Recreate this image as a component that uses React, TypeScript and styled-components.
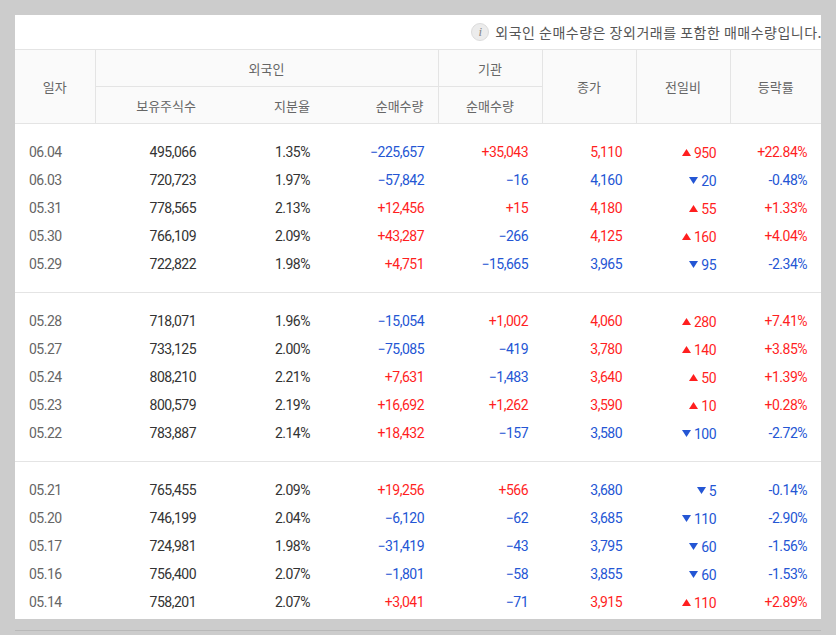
import React from 'react';
import styled, { createGlobalStyle } from 'styled-components';

const GlobalStyle = createGlobalStyle`
  html, body {
    margin: 0;
    padding: 0;
    background: #cccccc;
  }
`;

const Page = styled.div`
  padding: 15px 15px 0 15px;
  width: 806px;
`;

const Panel = styled.div`
  width: 806px;
  height: 604px;
  background: #fff;
  overflow: hidden;
`;

const BottomRule = styled.div`
  margin-top: 11px;
  height: 1px;
  background: #b9b9b9;
`;

const InfoBar = styled.div`
  height: 34px;
  display: flex;
  align-items: center;
  justify-content: flex-end;
  gap: 6px;
  margin-right: -1px;
  font-family: 'Noto Sans CJK KR', 'Noto Sans', sans-serif;
  font-size: 14px;
  letter-spacing: 0.5px;
  color: #555;
  white-space: nowrap;
`;

const InfoIcon = styled.span`
  width: 16px;
  height: 16px;
  border-radius: 50%;
  background: #ececec;
  border: 1px solid #dcdcdc;
  display: flex;
  align-items: center;
  justify-content: center;
  font-family: 'Liberation Serif', serif;
  font-style: italic;
  font-size: 13px;
  letter-spacing: 0;
  color: #888;
`;

const Table = styled.table`
  width: 806px;
  border-collapse: collapse;
  table-layout: fixed;
`;

const HeadCell = styled.th<{ $align?: string; $line?: boolean }>`
  height: 36px;
  padding: 0 14px;
  background: #fafafa;
  border-top: 1px solid #e4e4e4;
  border-bottom: 1px solid #e4e4e4;
  border-left: ${({ $line }) => ($line ? '1px solid #e4e4e4' : 'none')};
  font-family: 'Noto Sans CJK KR', 'Noto Sans', sans-serif;
  font-size: 13px;
  font-weight: 400;
  color: #666;
  text-align: ${({ $align }) => $align || 'center'};
`;

const Cell = styled.td<{ $color?: string; $left?: boolean; $pt?: number; $pb?: number; $sep?: boolean }>`
  height: 28px;
  padding: ${({ $pt }) => $pt || 0}px 14px ${({ $pb }) => $pb || 0}px;
  border-top: ${({ $sep }) => ($sep ? '1px solid #e4e4e4' : 'none')};
  font-family: Roboto, 'Liberation Sans', sans-serif;
  font-size: 14px;
  letter-spacing: -0.5px;
  color: ${({ $color }) => $color || '#333'};
  text-align: ${({ $left }) => ($left ? 'left' : 'right')};
  white-space: nowrap;
`;

const Change = styled.span`
  display: inline-flex;
  align-items: center;
  gap: 3px;
`;

const RED = '#ff1f1f';
const BLUE = '#2456d4';

type RowType = [string, string, string, string, string, string, number, string];

const groups: RowType[][] = [
  [
    ['06.04', '495,066', '1.35%', '−225,657', '+35,043', '5,110', 950, '+22.84%'],
    ['06.03', '720,723', '1.97%', '−57,842', '−16', '4,160', -20, '-0.48%'],
    ['05.31', '778,565', '2.13%', '+12,456', '+15', '4,180', 55, '+1.33%'],
    ['05.30', '766,109', '2.09%', '+43,287', '−266', '4,125', 160, '+4.04%'],
    ['05.29', '722,822', '1.98%', '+4,751', '−15,665', '3,965', -95, '-2.34%'],
  ],
  [
    ['05.28', '718,071', '1.96%', '−15,054', '+1,002', '4,060', 280, '+7.41%'],
    ['05.27', '733,125', '2.00%', '−75,085', '−419', '3,780', 140, '+3.85%'],
    ['05.24', '808,210', '2.21%', '+7,631', '−1,483', '3,640', 50, '+1.39%'],
    ['05.23', '800,579', '2.19%', '+16,692', '+1,262', '3,590', 10, '+0.28%'],
    ['05.22', '783,887', '2.14%', '+18,432', '−157', '3,580', -100, '-2.72%'],
  ],
  [
    ['05.21', '765,455', '2.09%', '+19,256', '+566', '3,680', -5, '-0.14%'],
    ['05.20', '746,199', '2.04%', '−6,120', '−62', '3,685', -110, '-2.90%'],
    ['05.17', '724,981', '1.98%', '−31,419', '−43', '3,795', -60, '-1.56%'],
    ['05.16', '756,400', '2.07%', '−1,801', '−58', '3,855', -60, '-1.53%'],
    ['05.14', '758,201', '2.07%', '+3,041', '−71', '3,915', 110, '+2.89%'],
  ],
];

const signColor = (v: string) => (v.startsWith('+') ? RED : BLUE);

const Arrow: React.FC<{ up: boolean }> = ({ up }) => (
  <svg width="9" height="7" viewBox="0 0 9 7">
    <path d={up ? 'M4.5 0 L9 7 L0 7 Z' : 'M0 0 L9 0 L4.5 7 Z'} fill={up ? RED : BLUE} />
  </svg>
);

const App: React.FC = () => (
  <>
    <GlobalStyle />
    <Page>
      <Panel>
        <InfoBar>
          <InfoIcon>i</InfoIcon>
          <span>외국인 순매수량은 장외거래를 포함한 매매수량입니다.</span>
        </InfoBar>
        <Table>
          <colgroup>
            <col style={{ width: 80 }} />
            <col style={{ width: 115 }} />
            <col style={{ width: 114 }} />
            <col style={{ width: 114 }} />
            <col style={{ width: 104 }} />
            <col style={{ width: 94 }} />
            <col style={{ width: 94 }} />
            <col style={{ width: 91 }} />
          </colgroup>
          <thead>
            <tr>
              <HeadCell rowSpan={2}>일자</HeadCell>
              <HeadCell colSpan={3} $line>외국인</HeadCell>
              <HeadCell $line>기관</HeadCell>
              <HeadCell rowSpan={2} $line>종가</HeadCell>
              <HeadCell rowSpan={2} $line>전일비</HeadCell>
              <HeadCell rowSpan={2} $line>등락률</HeadCell>
            </tr>
            <tr>
              <HeadCell $align="right" $line>보유주식수</HeadCell>
              <HeadCell $align="right">지분율</HeadCell>
              <HeadCell $align="right">순매수량</HeadCell>
              <HeadCell $line>순매수량</HeadCell>
            </tr>
          </thead>
          {groups.map((rows, g) => (
            <tbody key={g}>
              {rows.map((r, i) => {
                const pt = i === 0 ? 14 : 0;
                const pb = i === rows.length - 1 ? 14 : 0;
                const sep = i === 0 && g > 0;
                const up = r[6] > 0;
                const dirColor = up ? RED : BLUE;
                const p = { $pt: pt, $pb: pb, $sep: sep };
                return (
                  <tr key={r[0]}>
                    <Cell {...p} $left $color="#666">{r[0]}</Cell>
                    <Cell {...p}>{r[1]}</Cell>
                    <Cell {...p}>{r[2]}</Cell>
                    <Cell {...p} $color={signColor(r[3])}>{r[3]}</Cell>
                    <Cell {...p} $color={signColor(r[4])}>{r[4]}</Cell>
                    <Cell {...p} $color={dirColor}>{r[5]}</Cell>
                    <Cell {...p} $color={dirColor}>
                      <Change>
                        <Arrow up={up} />
                        {Math.abs(r[6])}
                      </Change>
                    </Cell>
                    <Cell {...p} $color={dirColor}>{r[7]}</Cell>
                  </tr>
                );
              })}
            </tbody>
          ))}
        </Table>
      </Panel>
      <BottomRule />
    </Page>
  </>
);

export default App;
